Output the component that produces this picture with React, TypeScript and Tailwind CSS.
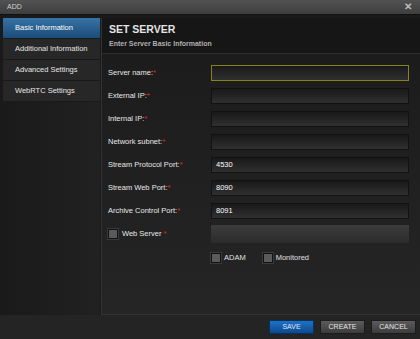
import React from 'react';

const font = { fontFamily: '"Liberation Sans", Arial, sans-serif' };

interface FieldProps {
  label: string;
  value?: string;
  focused?: boolean;
}

const Field: React.FC<FieldProps> = ({ label, value, focused }) => (
  <div className="flex items-center h-[16px] mb-[7px]">
    <div className="w-[103px] text-[7.5px] text-[#e8e8e8]">
      {label}
      <span className="text-[#e02424]">*</span>
    </div>
    <div
      className={`w-[198px] h-[16px] flex items-center pl-[4px] text-[7.5px] text-white bg-gradient-to-b from-[#191919] to-[#303030] border ${
        focused ? 'border-[#85851a]' : 'border-[#121212]'
      }`}
    >
      {value}
    </div>
  </div>
);

const Check: React.FC = () => (
  <div className="w-[10px] h-[10px] bg-[#5a5a5a] border border-[#111] shadow-[0_0_0_1px_#3a3a3a]" />
);

const menu = ['Basic Information', 'Additional Information', 'Advanced Settings', 'WebRTC Settings'];

const fields: FieldProps[] = [
  { label: 'Server name:', focused: true },
  { label: 'External IP:' },
  { label: 'Internal IP:' },
  { label: 'Network subnet:' },
  { label: 'Stream Protocol Port:', value: '4530' },
  { label: 'Stream Web Port:', value: '8090' },
  { label: 'Archive Control Port:', value: '8091' },
];

export default function App() {
  return (
    <div className="w-[420px] h-[339px] bg-[#1a1a1a] flex flex-col overflow-hidden" style={font}>
      {/* title bar */}
      <div className="h-[15px] flex items-center justify-between px-[7px] bg-gradient-to-b from-[#525252] to-[#3e3e3e] border-b border-[#111]">
        <span className="text-[7px] text-[#d0d0d0]">ADD</span>
        <span className="text-[10px] font-bold text-[#bdbdbd] leading-none mr-[1px]">✕</span>
      </div>

      <div className="flex flex-1 pt-[3px]">
        {/* sidebar */}
        <div className="w-[97px] ml-[3px] flex flex-col bg-gradient-to-r from-[#1a1a1a] to-[#212121]">
          {menu.map((m, i) => (
            <div
              key={m}
              className={`h-[21px] flex items-center pl-[12px] text-[7.5px] border-b border-[#1a1a1a] ${
                i === 0
                  ? 'bg-gradient-to-b from-[#3673a6] to-[#1c4c79] text-white'
                  : 'bg-[#272727] text-[#e6e6e6]'
              }`}
            >
              {m}
            </div>
          ))}
        </div>

        {/* main */}
        <div className="flex-1 ml-[1px] flex flex-col border-l border-[#333] border-b">
          <div className="h-[36px] bg-[#161616] border-b border-[#2e2e2e] pl-[7px] pt-[5px]">
            <div className="text-[10.5px] font-bold text-[#e4e4e4] leading-[12px]">SET SERVER</div>
            <div className="text-[7px] font-bold text-[#b0b0b0] mt-[4px]">Enter Server Basic Information</div>
          </div>
          <div className="flex-1 pl-[6px] pt-[11px] bg-gradient-to-b from-[#1c1c1c] to-[#252525]">
            {fields.map((f) => (
              <Field key={f.label} {...f} />
            ))}
            <div className="flex items-center h-[18px] mt-[-1px]">
              <div className="w-[103px] flex items-center gap-[4px] text-[7.5px] text-[#e8e8e8]">
                <Check />
                <span>
                  Web Server <span className="text-[#e02424]">*</span>
                </span>
              </div>
              <div className="w-[198px] h-[18px] bg-gradient-to-b from-[#3c3c3c] to-[#2c2c2c]" />
            </div>
            <div className="flex items-center mt-[9px] ml-[103px] text-[7.5px] text-[#e0e0e0]">
              <Check />
              <span className="ml-[3px]">ADAM</span>
              <div className="ml-[17px]">
                <Check />
              </div>
              <span className="ml-[3px]">Monitored</span>
            </div>
          </div>
        </div>
      </div>

      {/* footer */}
      <div className="h-[24px] flex items-center justify-end gap-[6px] pr-[4px] bg-[#242424]">
        <button className="w-[45px] h-[14px] text-[7px] text-[#dfe9f5] bg-gradient-to-b from-[#1d72c8] to-[#0d4a8e] border border-[#0a2f5c]">
          SAVE
        </button>
        <button className="w-[45px] h-[14px] text-[7px] text-[#e4e4e4] bg-gradient-to-b from-[#5c5c5c] to-[#3c3c3c] border border-[#1c1c1c]">
          CREATE
        </button>
        <button className="w-[45px] h-[14px] text-[7px] text-[#e4e4e4] bg-gradient-to-b from-[#5c5c5c] to-[#3c3c3c] border border-[#1c1c1c]">
          CANCEL
        </button>
      </div>
    </div>
  );
}
